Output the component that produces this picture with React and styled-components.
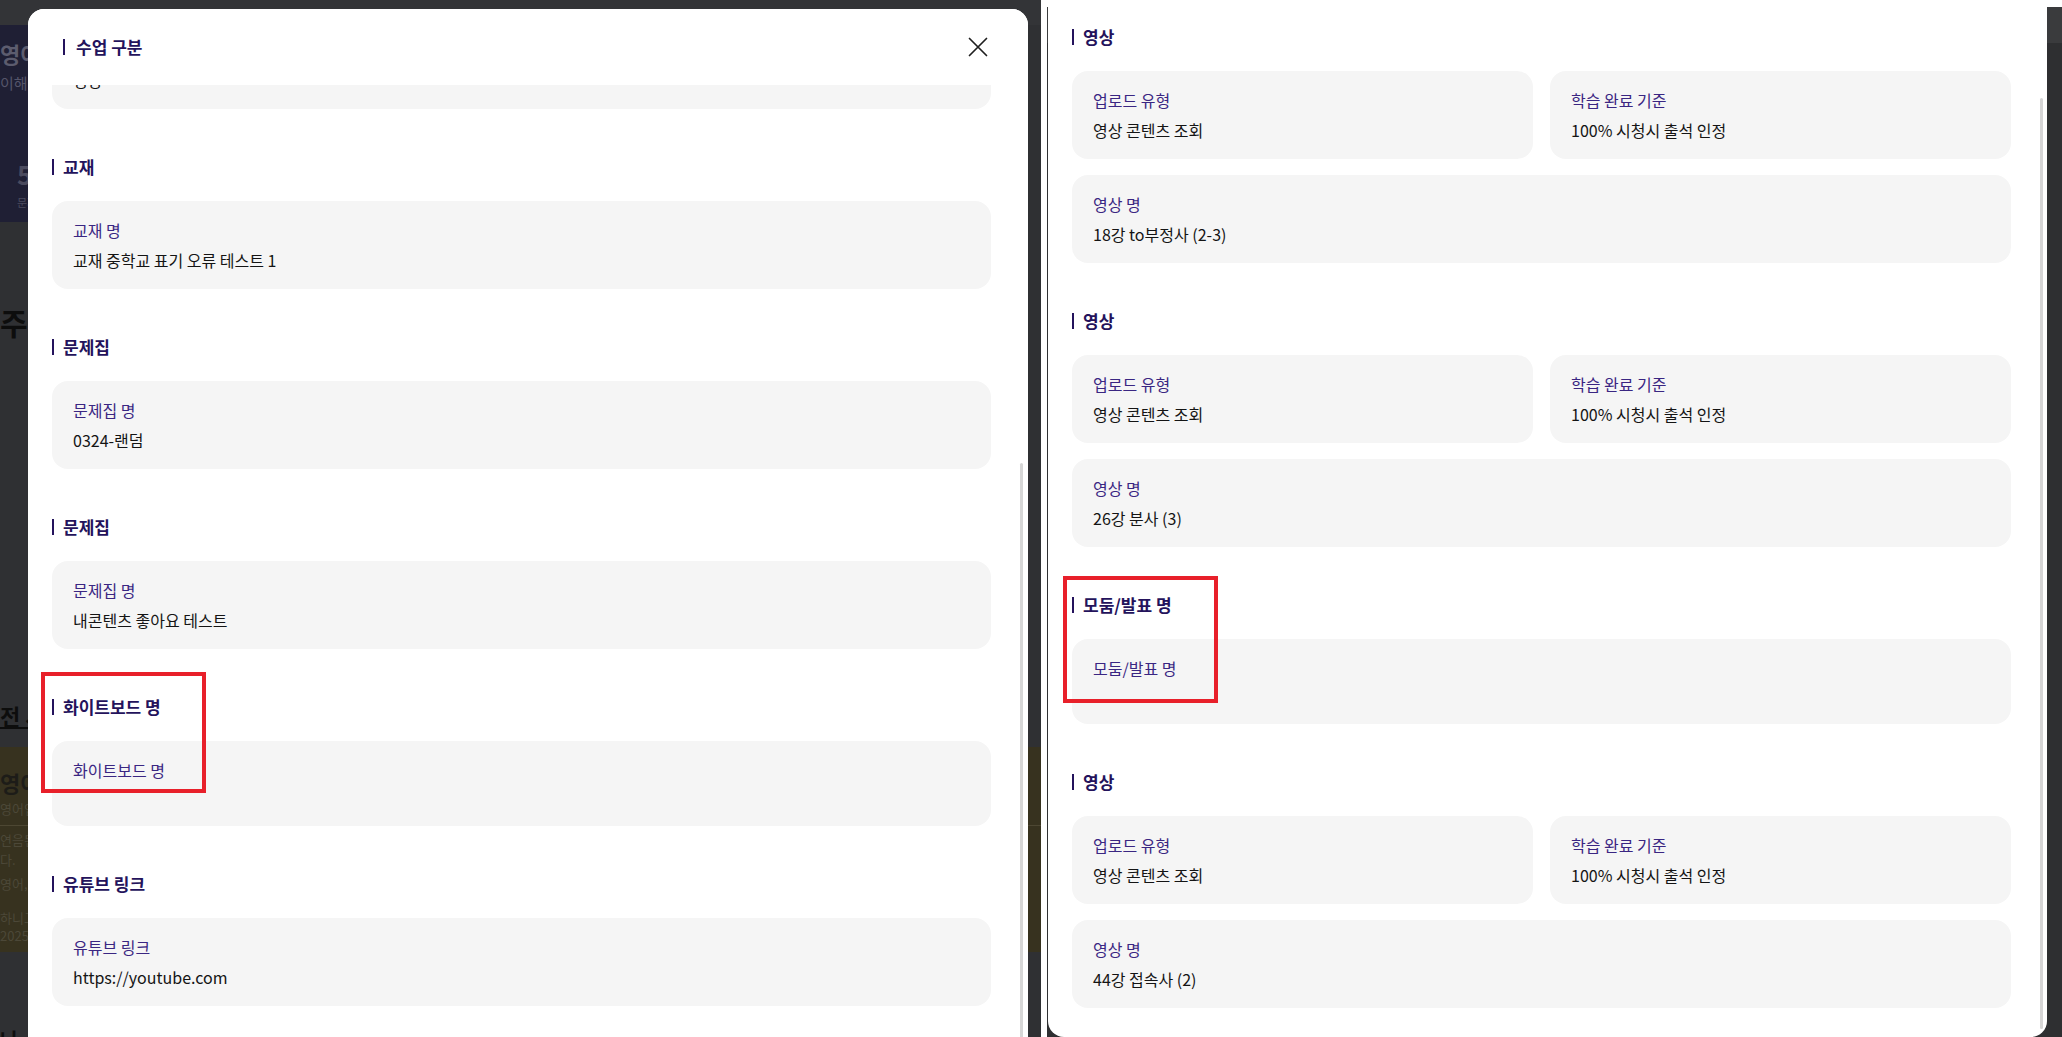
import React, { useLayoutEffect, useRef } from "react";
import styled, { createGlobalStyle } from "styled-components";

const GlobalStyle = createGlobalStyle`
  html, body {
    margin: 0;
    padding: 0;
  }
  body {
    font-family: "Noto Sans CJK KR", "Noto Sans", sans-serif;
    background: #ffffff;
  }
  * {
    box-sizing: border-box;
  }
`;

const leftSections = [
  { title: "수업 유형", cards: [{ label: "수업 유형", value: "영상" }] },
  { title: "교재", cards: [{ label: "교재 명", value: "교재 중학교 표기 오류 테스트 1" }] },
  { title: "문제집", cards: [{ label: "문제집 명", value: "0324-랜덤" }] },
  { title: "문제집", cards: [{ label: "문제집 명", value: "내콘텐츠 좋아요 테스트" }] },
  {
    title: "화이트보드 명",
    cards: [{ label: "화이트보드 명", value: "" }],
    mark: { top: -25, left: -11, width: 165, height: 121 },
  },
  { title: "유튜브 링크", cards: [{ label: "유튜브 링크", value: "https://youtube.com" }] },
];

const video = (name) => ({
  title: "영상",
  cards: [
    { label: "업로드 유형", value: "영상 콘텐츠 조회" },
    { label: "학습 완료 기준", value: "100% 시청시 출석 인정" },
    { label: "영상 명", value: name, wide: true },
  ],
});

const rightSections = [
  video("18강 to부정사 (2-3)"),
  video("26강 분사 (3)"),
  {
    title: "모둠/발표 명",
    cards: [{ label: "모둠/발표 명", value: "", wide: true }],
    mark: { top: -19, left: -9, width: 155, height: 127 },
  },
  video("44강 접속사 (2)"),
];

function Section({ data }) {
  return (
    <SectionBox>
      <SectionTitle>{data.title}</SectionTitle>
      <CardGrid>
        {data.cards.map((c, i) => (
          <Card key={i} $wide={c.wide || data.cards.length === 1}>
            <Label>{c.label}</Label>
            <Value>{c.value}</Value>
          </Card>
        ))}
      </CardGrid>
      {data.mark && (
        <Highlight
          style={{
            top: data.mark.top,
            left: data.mark.left,
            width: data.mark.width,
            height: data.mark.height,
          }}
        />
      )}
    </SectionBox>
  );
}

function CloseIcon() {
  return (
    <svg width="20" height="20" viewBox="0 0 20 20" fill="none">
      <path d="M1.5 1.5 L18.5 18.5 M18.5 1.5 L1.5 18.5" stroke="#1f1f1f" strokeWidth="1.7" strokeLinecap="round" />
    </svg>
  );
}

function BackgroundPage() {
  return (
    <BgPage>
      <BgTopBar />
      <BgHero>
        <BgText $size={22} $line={28} $bold $color="#5c5c6e">영어</BgText>
        <BgText $size={15} $line={20} $top={6} $color="#55556a">이해</BgText>
        <BgStat>
          <BgText $size={26} $line={30} $top={66} $bold $color="#4b4b5e">5</BgText>
          <BgText $size={11} $line={14} $top={6} $color="#4b4b5e">문제</BgText>
        </BgStat>
      </BgHero>
      <BgText $size={30} $line={36} $top={82} $bold $color="#0d0d0d">
        주 <BgBadge>0</BgBadge>
      </BgText>
      <BgText $size={22} $line={28} $top={356} $bold $color="#0d0d0d" $under>전 시</BgText>
      <BgNotice>
        <BgText $size={22} $line={26} $bold $color="#1d1c18">영어</BgText>
        <BgText $size={13} $line={16} $top={6} $color="#4c4838">영어입</BgText>
        <BgRule />
        <BgText $size={13} $line={16} $top={6} $color="#4c4838">연음된</BgText>
        <BgText $size={13} $line={16} $top={4} $color="#4c4838">다.</BgText>
        <BgText $size={13} $line={16} $top={8} $color="#4c4838">영어, 영</BgText>
        <BgText $size={13} $line={16} $top={18} $color="#4c4838">하니고</BgText>
        <BgText $size={13} $line={16} $top={2} $color="#4c4838">2025.</BgText>
      </BgNotice>
      <BgText $size={20} $line={24} $top={76} $bold $color="#0d0d0d">나</BgText>
    </BgPage>
  );
}

export default function App() {
  const bodyRef = useRef(null);

  useLayoutEffect(() => {
    if (bodyRef.current) bodyRef.current.scrollTop = 128;
  }, []);

  return (
    <>
      <GlobalStyle />
      <Page>
        <LeftShot>
          <BackgroundPage />
          <ModalLayer>
            <LeftModal>
              <ModalHeader>
                <SectionTitle $gap={11}>수업 구분</SectionTitle>
                <CloseButton aria-label="닫기">
                  <CloseIcon />
                </CloseButton>
              </ModalHeader>
              <ModalBody ref={bodyRef}>
                <SectionList $pad={200}>
                  {leftSections.map((s, i) => (
                    <Section key={i} data={s} />
                  ))}
                </SectionList>
              </ModalBody>
              <ScrollThumb $top={454} $right={5} $bottom={0} />
            </LeftModal>
          </ModalLayer>
        </LeftShot>

        <RightShot>
          <Backdrop>
            <RightModal>
              <SectionList $pad={40}>
                {rightSections.map((s, i) => (
                  <Section key={i} data={s} />
                ))}
              </SectionList>
              <ScrollThumb $top={91} $right={4} $bottom={8} />
            </RightModal>
          </Backdrop>
        </RightShot>
      </Page>
    </>
  );
}

const Page = styled.div`
  display: flex;
  width: 2062px;
  height: 1037px;
  overflow: hidden;
`;

/* ---------- left screenshot ---------- */

const LeftShot = styled.div`
  position: relative;
  flex-shrink: 0;
  width: 1041px;
  height: 1037px;
  overflow: hidden;
  background: #2f3033;
`;

const BgPage = styled.div`
  display: flex;
  flex-direction: column;
  width: 100%;
`;

const BgTopBar = styled.div`
  height: 25px;
  background: #333437;
`;

const BgHero = styled.div`
  display: flex;
  flex-direction: column;
  width: 520px;
  height: 197px;
  padding-top: 14px;
  background: #1f1f34;
`;

const BgStat = styled.div`
  display: flex;
  flex-direction: column;
  padding-left: 17px;
`;

const BgText = styled.div`
  margin-top: ${(p) => p.$top || 0}px;
  font-size: ${(p) => p.$size}px;
  line-height: ${(p) => p.$line}px;
  font-weight: ${(p) => (p.$bold ? 700 : 400)};
  color: ${(p) => p.$color};
  white-space: nowrap;
  text-decoration: ${(p) => (p.$under ? "underline" : "none")};
`;

const BgBadge = styled.span`
  color: #3a2a70;
  font-size: 18px;
`;

const BgNotice = styled.div`
  display: flex;
  flex-direction: column;
  height: 205px;
  margin-top: 18px;
  padding-top: 22px;
  background: #37321f;
`;

const BgRule = styled.div`
  height: 1px;
  margin-top: 8px;
  background: #4d4733;
`;

const ModalLayer = styled.div`
  position: absolute;
  inset: 0;
  padding: 9px 0 0 28px;
`;

const LeftModal = styled.div`
  position: relative;
  display: flex;
  flex-direction: column;
  width: 1000px;
  height: 1080px;
  background: #ffffff;
  border-radius: 16px 16px 0 0;
  overflow: hidden;
`;

const ModalHeader = styled.div`
  flex-shrink: 0;
  display: flex;
  align-items: center;
  justify-content: space-between;
  height: 76px;
  padding: 0 40px 0 35px;
  background: #ffffff;
`;

const CloseButton = styled.button`
  display: flex;
  padding: 0;
  border: none;
  background: none;
  cursor: pointer;
`;

const ModalBody = styled.div`
  flex: 1;
  overflow: hidden;
  padding: 20px 37px 0 24px;
`;

const ScrollThumb = styled.div`
  position: absolute;
  top: ${(p) => p.$top}px;
  right: ${(p) => p.$right}px;
  bottom: ${(p) => p.$bottom}px;
  width: 3px;
  border-radius: 2px;
  background: #d6d6d6;
`;

/* ---------- right screenshot ---------- */

const RightShot = styled.div`
  flex: 1;
  display: flex;
  height: 1037px;
  padding: 7px 0 0 6px;
  background: #ffffff;
`;

const Backdrop = styled.div`
  flex: 1;
  display: flex;
  padding: 0 15px 0 1px;
  background: linear-gradient(to bottom, #3a3b3d 0, #3a3b3d 36px, #2e2f31 36px);
`;

const RightModal = styled.div`
  position: relative;
  flex: 1;
  padding: 20px 36px 0 24px;
  background: #ffffff;
  border-radius: 0 0 16px 16px;
  overflow: hidden;
`;

/* ---------- shared content ---------- */

const SectionList = styled.div`
  display: flex;
  flex-direction: column;
  gap: 48px;
  padding-bottom: ${(p) => p.$pad}px;
`;

const SectionBox = styled.section`
  position: relative;
  display: flex;
  flex-direction: column;
  gap: 24px;
`;

const SectionTitle = styled.h3`
  display: flex;
  align-items: center;
  gap: ${(p) => p.$gap || 9}px;
  margin: 0;
  font-size: 17px;
  line-height: 20px;
  font-weight: 700;
  color: #24135c;

  &::before {
    content: "";
    width: 2px;
    height: 16px;
    background: #24135c;
  }
`;

const CardGrid = styled.div`
  display: grid;
  grid-template-columns: 1fr 1fr;
  gap: 16px 17px;
`;

const Card = styled.div`
  grid-column: ${(p) => (p.$wide ? "1 / -1" : "auto")};
  display: flex;
  flex-direction: column;
  gap: 10px;
  padding: 19px 21px;
  border-radius: 16px;
  background: #f5f5f5;
`;

const Label = styled.div`
  font-size: 16px;
  line-height: 20px;
  color: #3a2682;
`;

const Value = styled.div`
  min-height: 17px;
  font-size: 16px;
  line-height: 20px;
  color: #141414;
`;

const Highlight = styled.div`
  position: absolute;
  border: 4px solid #e8202a;
  pointer-events: none;
`;
